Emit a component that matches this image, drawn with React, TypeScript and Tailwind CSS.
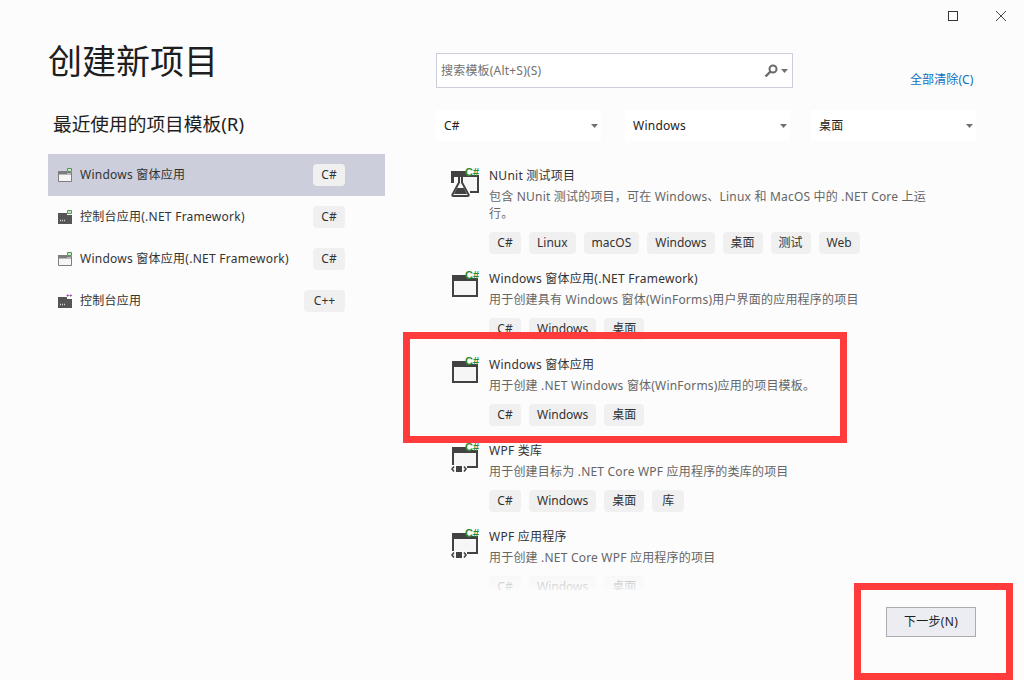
import React from 'react';

type IconKind = 'window' | 'flask' | 'wpf';

const RECENT = [
  { name: 'Windows 窗体应用', lang: 'C#', icon: 'window', active: true },
  { name: '控制台应用(.NET Framework)', lang: 'C#', icon: 'console' },
  { name: 'Windows 窗体应用(.NET Framework)', lang: 'C#', icon: 'window' },
  { name: '控制台应用', lang: 'C++', icon: 'console' },
];

const TEMPLATES: { title: string; desc: string; tags: string[]; icon: IconKind }[] = [
  {
    title: 'NUnit 测试项目',
    desc: '包含 NUnit 测试的项目，可在 Windows、Linux 和 MacOS 中的 .NET Core 上运行。',
    tags: ['C#', 'Linux', 'macOS', 'Windows', '桌面', '测试', 'Web'],
    icon: 'flask',
  },
  {
    title: 'Windows 窗体应用(.NET Framework)',
    desc: '用于创建具有 Windows 窗体(WinForms)用户界面的应用程序的项目',
    tags: ['C#', 'Windows', '桌面'],
    icon: 'window',
  },
  {
    title: 'Windows 窗体应用',
    desc: '用于创建 .NET Windows 窗体(WinForms)应用的项目模板。',
    tags: ['C#', 'Windows', '桌面'],
    icon: 'window',
  },
  {
    title: 'WPF 类库',
    desc: '用于创建目标为 .NET Core WPF 应用程序的类库的项目',
    tags: ['C#', 'Windows', '桌面', '库'],
    icon: 'wpf',
  },
  {
    title: 'WPF 应用程序',
    desc: '用于创建 .NET Core WPF 应用程序的项目',
    tags: ['C#', 'Windows', '桌面'],
    icon: 'wpf',
  },
];

function Caret() {
  return (
    <svg width="7" height="4" viewBox="0 0 7 4">
      <path d="M0 0h7L3.5 4z" fill="#717171" />
    </svg>
  );
}

function SmallIcon({ kind, lang }: { kind: string; lang: string }) {
  return (
    <svg width="16" height="16" viewBox="0 0 16 16" className="shrink-0">
      {kind === 'console' ? (
        <>
          <path d="M1 4h9v2h5v9H1z" fill="#555555" />
          <path d="M3 11.5h5" stroke="#d4d4d4" strokeWidth="1.4" strokeDasharray="1 1" />
        </>
      ) : (
        <>
          <path d="M1.5 5.5h13v9h-13z" fill="#f6f6f6" stroke="#7d7d7d" />
          <path d="M1 4h9v2.5h5v1H1z" fill="#7d7d7d" />
        </>
      )}
      {lang === 'C++' ? (
        <path d="M9.5 2.5h2.4M10.7 1.3v2.4M12.5 2.5h2.4M13.7 1.3v2.4" stroke="#a24fb0" strokeWidth="1" />
      ) : (
        <path d="M10.5 1.5h4v3h-4z" fill="#cfe3cf" stroke="#4d9a4d" strokeWidth="1" />
      )}
    </svg>
  );
}

function TemplateIcon({ kind }: { kind: IconKind }) {
  return (
    <div className="relative h-[32px] w-[29px] shrink-0">
      <svg width="29" height="32" viewBox="0 0 29 32">
        {kind === 'flask' ? (
          <>
            <path d="M0 5h16v4h12v18H19v-2h7V11H3v6H0z" fill="#424242" />
            <path d="M3 11h23v14h-8l-5-9v-5z" fill="#f6f6f6" />
            {/* flask outline with the liquid in its lower half */}
            <path
              d="M8 10v6.5L1.4 28.6q-.5 1.4 1 1.4h14.2q1.5 0 1-1.4L11 16.5V10"
              fill="#f6f6f6"
              stroke="#424242"
              strokeWidth="2"
            />
            <path d="M5.5 10h8" stroke="#424242" strokeWidth="2" />
            <path d="M6 22h7l3 6H3z" fill="#424242" />
          </>
        ) : kind === 'wpf' ? (
          <>
            <path d="M1 6h15v3h11v18H16v-2h9V12H3v12H1z" fill="#424242" />
            <path d="M3 12h22v13H16v-1H3z" fill="#f6f6f6" />
            <path d="M3 25.5 1 28l2 2.5M13 25.5l2 2.5-2 2.5" fill="none" stroke="#424242" strokeWidth="1.6" />
            <path d="M5 25h6v6H5z" fill="#424242" />
          </>
        ) : (
          <>
            <path d="M1 6h15v3h11v19H1z" fill="#424242" />
            <path d="M3 12h22v14H3z" fill="#f6f6f6" />
          </>
        )}
      </svg>
      <span className="absolute right-[1px] top-[1px] font-['Liberation_Sans',sans-serif] text-[11px] leading-[10px] font-bold text-[#2f8a2f]">C#</span>
    </div>
  );
}

function Tag({ label, className = '' }: { label: string; className?: string }) {
  return (
    <span className={`inline-flex h-[22px] min-w-[32px] items-center justify-center rounded-[4px] bg-[#f0f0f0] px-[8px] text-[12px] text-[#333333] ${className}`}>
      {label}
    </span>
  );
}

function Dropdown({ label, className }: { label: string; className: string }) {
  return (
    <div className={`flex h-[31px] items-center justify-between bg-white pl-[8px] pr-[3px] text-[12px] tracking-[0.25px] text-[#222222] ${className}`}>
      <span>{label}</span>
      <Caret />
    </div>
  );
}

export default function App() {
  return (
    <div className="relative flex h-[680px] w-[1024px] flex-col overflow-hidden bg-[#fcfcfc] font-['Noto_Sans','Noto_Sans_CJK_SC',sans-serif]">
      {/* window buttons */}
      <div className="flex h-[30px] items-center justify-end gap-[37px] pr-[17px] pt-[2px]">
        <div className="h-[10px] w-[10px] border border-[#333333]" />
        <svg width="12" height="12" viewBox="0 0 12 12">
          <path d="M1 1l10 10M11 1L1 11" stroke="#444444" strokeWidth="1" />
        </svg>
      </div>

      <div className="flex min-h-0 flex-1">
        {/* left column */}
        <div className="ml-[48px] w-[337px]">
          <h1 className="mt-[8px] h-[46px] text-[34px] leading-[46px] font-normal text-[#1e1e1e]">创建新项目</h1>
          <h2 className="ml-[5px] mt-[26px] h-[28px] text-[18.7px] leading-[28px] font-normal text-[#1e1e1e]">最近使用的项目模板(R)</h2>
          <div className="mt-[16px]">
            {RECENT.map((item) => (
              <div
                key={item.name}
                className={`flex h-[42px] items-center pl-[9px] pr-[40px] ${item.active ? 'bg-[#cccedb]' : ''}`}
              >
                <SmallIcon kind={item.icon} lang={item.lang} />
                <span className="ml-[7px] flex-1 text-[12px] tracking-[0.25px] text-[#333333]">{item.name}</span>
                <Tag label={item.lang} className={item.lang === 'C++' ? 'w-[41px]' : 'w-[32px]'} />
              </div>
            ))}
          </div>
        </div>

        {/* right column */}
        <div className="ml-[51px] flex w-[540px] flex-col">
          <div className="flex items-end">
            <div className="mt-[23px] flex h-[35px] w-[357px] items-center border border-[#cccedb] bg-white px-[4px]">
              <span className="flex-1 pt-[1px] text-[12px] tracking-[0.2px] text-[#717171]">搜索模板(Alt+S)(S)</span>
              <svg width="14" height="14" viewBox="0 0 14 14">
                <circle cx="9" cy="5" r="3.5" fill="none" stroke="#6a6a6a" strokeWidth="2" />
                <path d="M6.5 7.5L1.5 12.5" stroke="#6a6a6a" strokeWidth="2.4" />
              </svg>
              <span className="ml-[3px]">
                <Caret />
              </span>
            </div>
            <a className="mb-[-1px] ml-[117px] text-[12px] leading-[18px] tracking-[0.1px] text-[#0e70c0]">全部清除(C)</a>
          </div>

          <div className="mt-[22px] flex">
            <Dropdown label="C#" className="w-[165px]" />
            <Dropdown label="Windows" className="ml-[24px] w-[165px]" />
            <Dropdown label="桌面" className="ml-[21px] w-[165px]" />
          </div>

          <div className="relative mt-[15px] min-h-0 flex-1 overflow-hidden">
            {TEMPLATES.map((t) => (
              <div key={t.title} className="flex pb-[5px] pl-[15px] pr-[44px] pt-[10px]">
                <TemplateIcon kind={t.icon} />
                <div className="ml-[9px] min-w-0 flex-1">
                  <div className="pt-[1px] text-[12px] leading-[18px] tracking-[0.25px] text-[#333333]">{t.title}</div>
                  <div className="mt-[3px] text-[12px] leading-[17px] tracking-[0.2px] text-[#666666]">{t.desc}</div>
                  <div className="mt-[10px] flex gap-[8px]">
                    {t.tags.map((tag) => (
                      <Tag key={tag} label={tag} />
                    ))}
                  </div>
                </div>
              </div>
            ))}
            {/* the list fades out above the footer */}
            <div className="absolute inset-x-0 bottom-0 h-[14px] bg-linear-to-t from-[#fcfcfc]/90 to-[#fcfcfc]/65" />
          </div>
        </div>
      </div>

      <div className="flex h-[90px] shrink-0 items-start justify-end pr-[48px] pt-[17px]">
        <button className="h-[30px] w-[90px] border border-[#acacac] bg-[#ecedf2] text-[12px] tracking-[0.3px] text-[#1e1e1e]">下一步(N)</button>
      </div>

      {/* highlight frames drawn over the dialog */}
      <div className="pointer-events-none absolute left-[403px] top-[332px] h-[111px] w-[444px] border-[7px] border-[#ff3b3b]" />
      <div className="pointer-events-none absolute left-[854px] top-[583px] h-[97px] w-[159px] border-[7px] border-[#ff3b3b]" />
    </div>
  );
}
